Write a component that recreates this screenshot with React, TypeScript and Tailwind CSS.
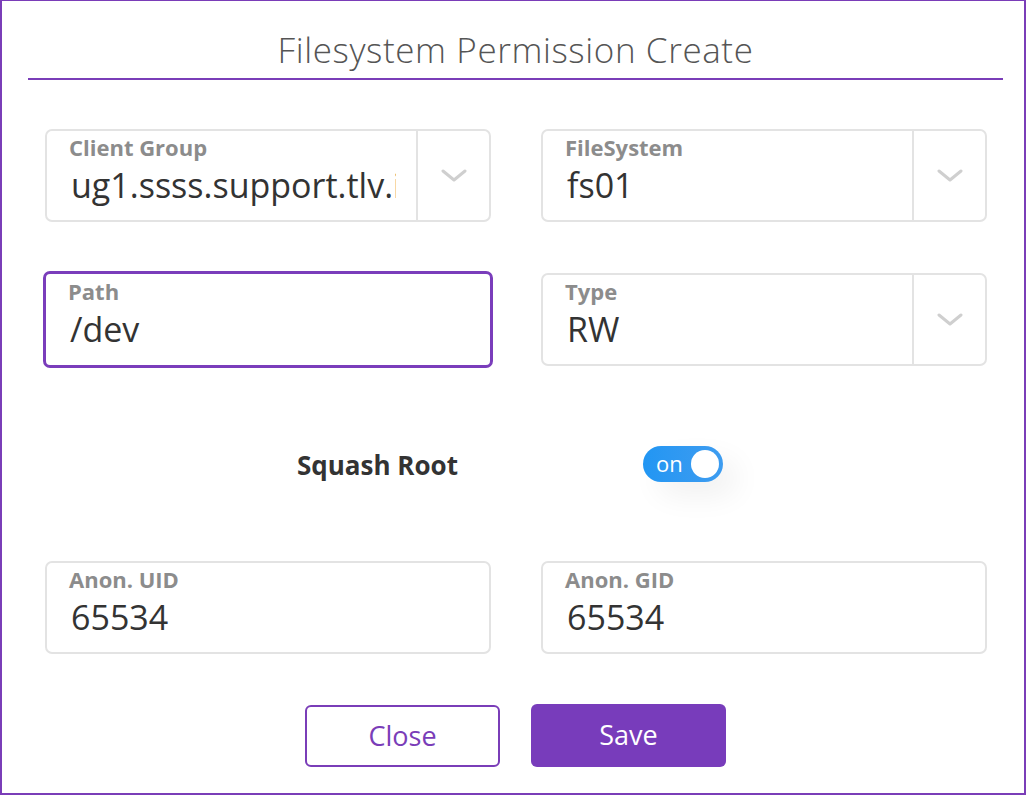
import type { ReactNode } from 'react';

const FONT = { fontFamily: '"Open Sans", "Noto Sans", sans-serif' };

function Chevron() {
  return (
    <svg width="26" height="14" viewBox="0 0 26 14" fill="none">
      <path d="M2 2 L13 11 L24 2" stroke="#cfcfcf" strokeWidth="3" strokeLinecap="round" strokeLinejoin="round" />
    </svg>
  );
}

interface FieldProps {
  label: string;
  value: string;
  select?: boolean;
  focused?: boolean;
}

function Field({ label, value, select, focused }: FieldProps) {
  return (
    <div
      className={`flex rounded-[7px] bg-white ${
        focused
          ? '-mx-[2px] -my-[2px] h-[97px] w-[450px] border-[3px] border-[#7a3dbb]'
          : 'h-[93px] w-[446px] border-2 border-[#e3e3e3]'
      }`}
    >
      <div className={`flex min-w-0 flex-1 flex-col pr-[20px] pl-[22px] ${focused ? 'pt-[4px]' : 'pt-[3px]'}`}>
        <span className="text-[22px] leading-[26px] font-bold text-[#8c8c8c]">{label}</span>
        <span className="mt-[1px] overflow-hidden whitespace-nowrap pl-[2px] text-[34px] leading-[48px] text-[#333]">
          {value}
        </span>
      </div>
      {select && (
        <div className="flex w-[73px] items-center justify-center border-l-2 border-[#e3e3e3]">
          <Chevron />
        </div>
      )}
    </div>
  );
}

function Row({ children }: { children: ReactNode }) {
  return <div className="flex gap-[50px] pl-[43px]">{children}</div>;
}

export default function App() {
  return (
    <div className="h-[796px] w-[1026px] bg-white" style={FONT}>
      <div className="flex h-[795px] w-[1026px] flex-col border-2 border-t border-[#7a3db8] bg-white">
        <h1 className="pt-[29px] pl-[5px] text-center text-[35px] leading-[40px] font-light tracking-[0.6px] text-[#555]">
          Filesystem Permission Create
        </h1>
        <div className="mt-[8px] mr-[21px] ml-[26px] h-[2px] bg-[#7a3db8]" />

        <div className="mt-[49px] flex flex-col">
          <Row>
            <Field label="Client Group" value="ug1.ssss.support.tlv.i" select />
            <Field label="FileSystem" value="fs01" select />
          </Row>
          <div className="mt-[51px]">
            <Row>
              <Field label="Path" value="/dev" focused />
              <Field label="Type" value="RW" select />
            </Row>
          </div>

          <div className="flex h-[195px] items-center">
            <span className="ml-[295px] w-[346px] pt-[4px] text-[26px] font-bold text-[#333]">Squash Root</span>
            <div className="flex h-[36px] w-[80px] items-center justify-between rounded-full bg-gradient-to-r from-[#2196f3] to-[#3d9cf0] pr-[4px] pl-[13px] shadow-[14px_14px_30px_rgba(0,0,0,0.06)]">
              <span className="pb-[2px] text-[22px] leading-none text-white">on</span>
              <span className="h-[28px] w-[28px] rounded-full bg-white" />
            </div>
          </div>

          <Row>
            <Field label="Anon. UID" value="65534" />
            <Field label="Anon. GID" value="65534" />
          </Row>
        </div>

        <div className="mt-[50px] flex items-end justify-center gap-[31px] pl-[5px]">
          <button className="h-[62px] w-[195px] rounded-[6px] border-2 border-[#7a3db8] bg-white text-[27px] text-[#7a3db8]">
            Close
          </button>
          <button className="h-[63px] w-[195px] rounded-[6px] bg-[#783cbb] text-[27px] text-white">
            Save
          </button>
        </div>
      </div>
    </div>
  );
}
